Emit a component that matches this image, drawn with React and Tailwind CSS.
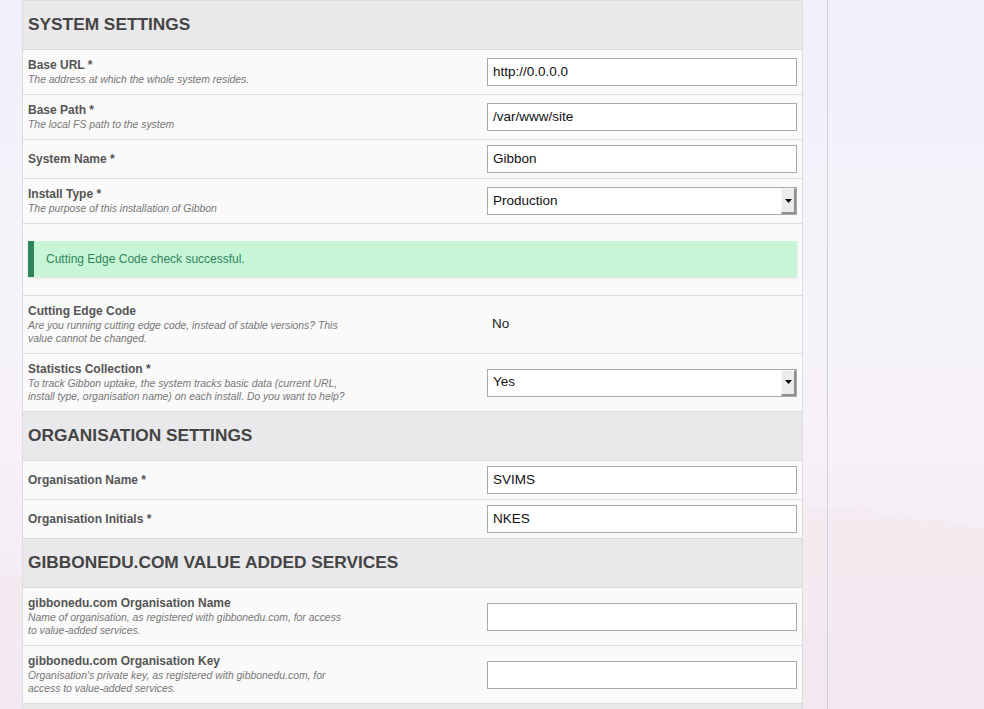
import React from 'react'

// Gibbon installer — settings form

const FONT = { fontFamily: '"Liberation Sans", Arial, Helvetica, sans-serif' }

function SectionHeader({ title }) {
  return (
    <div className="h-[49px] flex items-center pl-[5px] bg-[#e9e9eb] border-b border-[#dcdcdc]">
      <h3 className="text-[17.3px] font-bold text-[#444]">{title}</h3>
    </div>
  )
}

function TextInput({ value }) {
  return (
    <div className="h-[28px] w-full bg-white border border-[#aaaaaa] flex items-center px-[5px] text-[13.5px] text-[#111]">
      {value}
    </div>
  )
}

function SelectInput({ value }) {
  return (
    <div className="h-[28px] w-full bg-white border border-[#aaaaaa] flex items-center text-[13.5px] text-[#111]">
      <span className="flex-1 px-[5px]">{value}</span>
      <span className="h-full w-[15px] bg-[#ececec] border-l border-t border-l-[#f7f7f7] border-t-[#f7f7f7] border-r-2 border-b-2 border-r-[#8f8f8f] border-b-[#8f8f8f] flex items-center justify-center">
        <svg width="7" height="4" viewBox="0 0 7 4"><path d="M0 0h7L3.5 4z" fill="#111" /></svg>
      </span>
    </div>
  )
}

function Row({ label, desc, children }) {
  return (
    <div className="flex items-center bg-[#fafafa] border-b border-[#dddddd] min-h-[39px]">
      <div className="flex-1 pl-[5px] pt-[8px] pb-[8px]">
        <div className="text-[12px] leading-[15px] font-bold text-[#555]">{label}</div>
        {desc && (
          <div className="text-[10.4px] leading-[13px] italic text-[#777] max-w-[318px]">{desc}</div>
        )}
      </div>
      <div className="w-[315px] pr-[5px] py-[5px]">{children}</div>
    </div>
  )
}

export default function App() {
  return (
    <div
      className="relative w-full h-[709px] overflow-hidden bg-gradient-to-b from-[#f1effa] via-[#f7f4f9] to-[#f2eaf1]"
      style={FONT}
    >
      {/* faint mountain ridge in the backdrop */}
      <svg className="absolute left-0 bottom-0 w-full h-[210px]" viewBox="0 0 984 210" preserveAspectRatio="none">
        <path
          d="M0 80 L12 70 L22 76 L40 60 L60 72 L80 58 L110 74 L150 60 L190 70 L240 52 L270 60 L300 46 L330 56 L360 44 L420 60 L480 50 L540 66 L600 48 L640 58 L700 40 L760 50 L800 12 L815 6 L830 10 L850 8 L862 4 L878 16 L900 14 L920 22 L940 20 L960 26 L984 30 L984 210 L0 210 Z"
          fill="#f3e6ee"
          opacity="0.45"
        />
      </svg>

      <div className="relative flex h-full">
        <div className="w-[828px] h-full border-r border-[#cfcfd6] pl-[22px]">
          <div className="w-[781px] border-l border-r border-t border-[#dcdcdc]">
            <SectionHeader title="SYSTEM SETTINGS" />
            <Row label="Base URL *" desc="The address at which the whole system resides.">
              <TextInput value="http://0.0.0.0" />
            </Row>
            <Row label="Base Path *" desc="The local FS path to the system">
              <TextInput value="/var/www/site" />
            </Row>
            <Row label="System Name *">
              <TextInput value="Gibbon" />
            </Row>
            <Row label="Install Type *" desc="The purpose of this installation of Gibbon">
              <SelectInput value="Production" />
            </Row>

            {/* success notice */}
            <div className="bg-[#fafafa] border-b border-[#dddddd] px-[5px] pt-[17px] pb-[18px]">
              <div className="h-[36px] flex items-center bg-[#c6f6d5] border-l-[6px] border-[#2f855a] pl-[12px] text-[12px] text-[#2f855a] shadow-[0_1px_2px_rgba(0,0,0,0.12)]">
                Cutting Edge Code check successful.
              </div>
            </div>

            <Row
              label="Cutting Edge Code"
              desc="Are you running cutting edge code, instead of stable versions? This value cannot be changed."
            >
              <div className="pl-[5px] text-[13.5px] text-[#222]">No</div>
            </Row>
            <Row
              label="Statistics Collection *"
              desc="To track Gibbon uptake, the system tracks basic data (current URL, install type, organisation name) on each install. Do you want to help?"
            >
              <SelectInput value="Yes" />
            </Row>

            <SectionHeader title="ORGANISATION SETTINGS" />
            <Row label="Organisation Name *">
              <TextInput value="SVIMS" />
            </Row>
            <Row label="Organisation Initials *">
              <TextInput value="NKES" />
            </Row>

            <SectionHeader title="GIBBONEDU.COM VALUE ADDED SERVICES" />
            <Row
              label="gibbonedu.com Organisation Name"
              desc="Name of organisation, as registered with gibbonedu.com, for access to value-added services."
            >
              <TextInput value="" />
            </Row>
            <Row
              label="gibbonedu.com Organisation Key"
              desc="Organisation's private key, as registered with gibbonedu.com, for access to value-added services."
            >
              <TextInput value="" />
            </Row>
            <SectionHeader title="" />
          </div>
        </div>
        <div className="flex-1" />
      </div>
    </div>
  )
}
